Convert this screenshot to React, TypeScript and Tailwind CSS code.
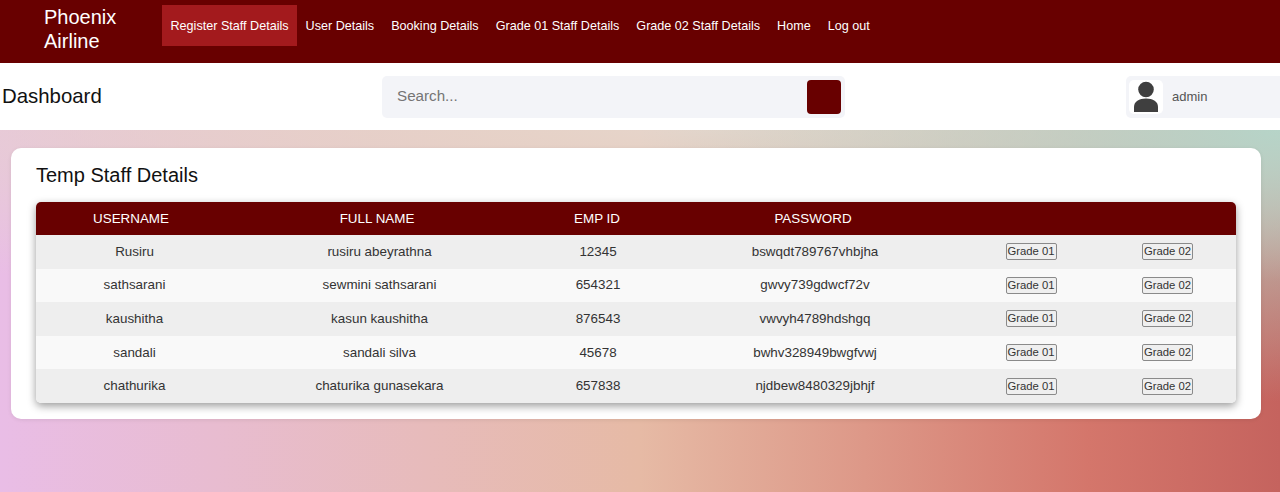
const links = [
  "Register Staff Details",
  "User Details",
  "Booking Details",
  "Grade 01 Staff Details",
  "Grade 02 Staff Details",
  "Home",
  "Log out",
];

const staff = [
  ["Rusiru", "rusiru abeyrathna", "12345", "bswqdt789767vhbjha"],
  ["sathsarani", "sewmini sathsarani", "654321", "gwvy739gdwcf72v"],
  ["kaushitha", "kasun kaushitha", "876543", "vwvyh4789hdshgq"],
  ["sandali", "sandali silva", "45678", "bwhv328949bwgfvwj"],
  ["chathurika", "chaturika gunasekara", "657838", "njdbew8480329jbhjf"],
];

// body cells sit a little right of their headers in the original
const cellPad = ["pl-[7px]", "pl-[5px]", "pl-[2px]", "pl-[4px]"];

function GradeButton({ label }: { label: string }) {
  return (
    <button className="mx-auto block h-[17px] w-[51px] rounded-[2px] border border-[#8a8a8a] bg-[#efefef] text-[11.3px] leading-none text-[#333]">
      {label}
    </button>
  );
}

export default function App() {
  return (
    <div className="flex h-[492px] w-[1280px] flex-col overflow-hidden font-['Liberation_Sans',Arial,sans-serif]">
      <nav className="flex h-[63px] shrink-0 items-start bg-[#680000] pl-[44px] text-white">
        <div className="mt-[5px] w-[118px] text-[20px] leading-[24px]">
          Phoenix
          <br />
          Airline
        </div>
        <ul className="flex">
          {links.map((l, i) => (
            <li
              key={l}
              className={
                "mt-[5px] flex h-[41px] items-center px-[8.5px] pt-px text-[12.6px] " +
                (i === 0 ? "bg-[#a31a1d]" : "")
              }
            >
              {l}
            </li>
          ))}
        </ul>
      </nav>

      <header className="flex h-[67px] shrink-0 items-center bg-white pl-[2px]">
        <h1 className="w-[380px] shrink-0 text-[20.4px] text-[#111]">Dashboard</h1>
        <div className="flex h-[42px] w-[463px] shrink-0 items-center justify-between rounded-[5px] bg-[#f3f4f8] pl-[15px] pr-[4px]">
          <span className="text-[15.2px] text-[#757575]">Search...</span>
          <button className="h-[34px] w-[34px] rounded-[4px] bg-[#680000]" />
        </div>
        <div className="ml-[281px] flex h-[42px] w-[160px] shrink-0 items-center gap-[9px] rounded-l-[5px] bg-[#f3f4f8] pl-[3px]">
          <div className="flex h-[34px] w-[34px] items-center justify-center overflow-hidden rounded-[5px] bg-white">
            <svg width="26" height="32" viewBox="0 0 26 32" fill="#3f3f3f">
              <circle cx="13" cy="8.5" r="7.8" />
              <path d="M1 31 v-5 c0-5.500 5-8.500 12-8.500 s12 3 12 8.500 v5 z" />
            </svg>
          </div>
          <span className="text-[13px] text-[#555]">admin</span>
        </div>
      </header>

      <main className="flex-1 bg-[radial-gradient(ellipse_50%_75%_at_100%_0%,#b6d4c8_0%,rgba(182,212,200,0)_100%),radial-gradient(ellipse_120%_45%_at_55%_0%,#e6d5cb_0%,rgba(230,213,203,0)_100%),linear-gradient(90deg,#e9bde6_0%,#e6baa5_50%,#d4766b_85%,#c5635e_100%)] pl-[11px] pr-[19px] pt-[18px]">
        <section className="h-[271px] rounded-[10px] bg-white px-[25px] pt-[15px] shadow-[0_1px_4px_rgba(0,0,0,0.08)]">
          <h2 className="mb-[15px] text-[20px] leading-[24px] text-[#111]">Temp Staff Details</h2>
          <div className="overflow-hidden rounded-[5px] shadow-[0_3px_8px_rgba(0,0,0,0.4)]">
            <table className="w-[1200px] table-fixed border-collapse text-center text-[13.4px] text-[#333]">
              <colgroup>
                <col className="w-[190px]" />
                <col className="w-[302px]" />
                <col className="w-[138px]" />
                <col className="w-[294px]" />
                <col className="w-[142px]" />
                <col className="w-[134px]" />
              </colgroup>
              <thead>
                <tr className="h-[33px] bg-[#680000] text-white">
                  <th className="pt-px font-normal">USERNAME</th>
                  <th className="pt-px font-normal">FULL NAME</th>
                  <th className="pt-px font-normal">EMP ID</th>
                  <th className="pt-px font-normal">PASSWORD</th>
                  <th />
                  <th />
                </tr>
              </thead>
              <tbody>
                {staff.map((row, i) => (
                  <tr key={row[0]} className={"h-[33.6px] " + (i % 2 === 0 ? "bg-[#eeeeee]" : "bg-[#f9f9f9]")}>
                    {row.map((c, j) => (
                      <td key={c} className={cellPad[j]}>
                        {c}
                      </td>
                    ))}
                    <td>
                      <GradeButton label="Grade 01" />
                    </td>
                    <td className="pr-[3px]">
                      <GradeButton label="Grade 02" />
                    </td>
                  </tr>
                ))}
              </tbody>
            </table>
          </div>
        </section>
      </main>
    </div>
  );
}
